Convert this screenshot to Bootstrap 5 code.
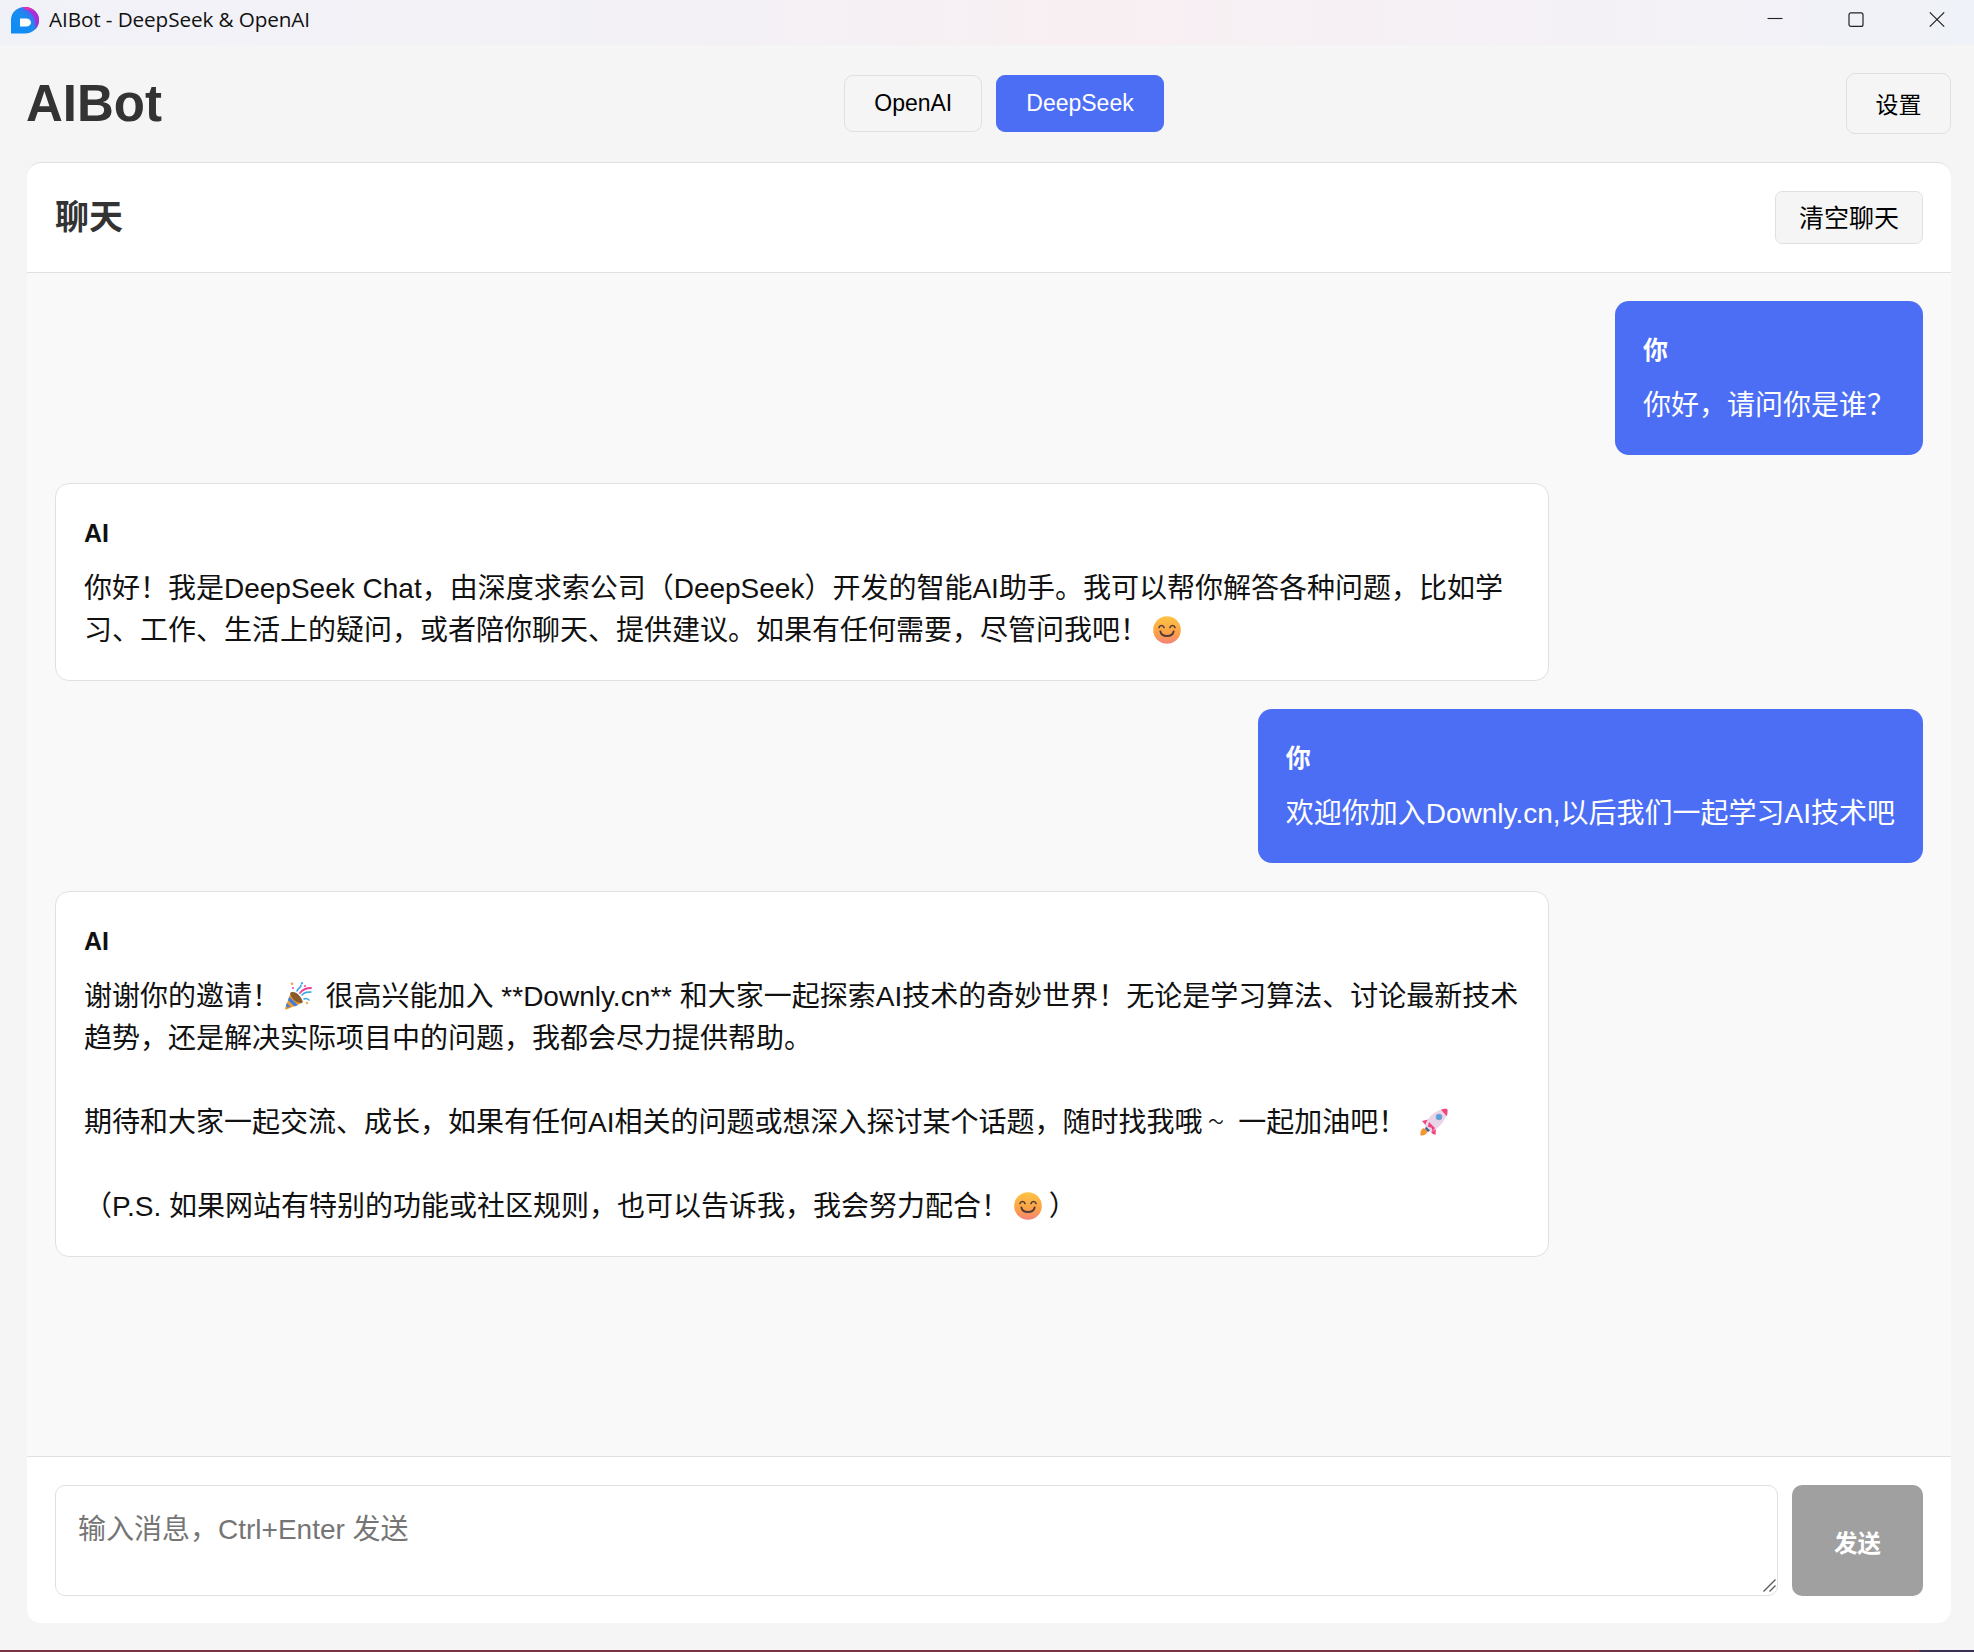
<!DOCTYPE html>
<html lang="zh-CN">
<head>
<meta charset="utf-8">
<title>AIBot - DeepSeek &amp; OpenAI</title>
<link href="https://cdn.jsdelivr.net/npm/bootstrap@5.3.0/dist/css/bootstrap.min.css" rel="stylesheet">
<style>
html,body{height:1652px;overflow:hidden}
body{background:#f5f5f5;font-family:"Liberation Sans","Noto Sans CJK SC",sans-serif;color:#000}
.win{height:1652px}
.titlebar{height:45px;padding:0 0 5px 10px;background:linear-gradient(90deg,#f1f2f8 0%,#f3f1f6 35%,#f8eff2 55%,#f4f1f6 80%,#eff2f8 100%)}
.titlebar .ttl{font-family:"Open Sans","Noto Sans CJK SC",sans-serif;font-size:20.7px;margin-left:9px;color:#111;letter-spacing:-.1px}
.wcs{gap:6px}
.wc{width:75px}
.apphead{height:117px;padding:0 23px 0 26px}
.brand{font-size:51px;font-weight:700;color:#333;margin:0;line-height:1.2}
.app-btn{font-size:23px;line-height:35px;padding:10px 29px;border:1px solid #e0e0e0;background:#f5f5f5;color:#000;border-radius:9px}
.app-btn.on{background:#4c6ef5;border-color:#4c6ef5;color:#fff}
.modegroup{gap:14px}
.setbtn{padding:15px 28.5px 11px;line-height:33px}
.panel{margin:0 23px 27px 27px;background:#fff;border-top:1px solid #e0e0e0;border-radius:14px;overflow:hidden;min-height:0}
.panelhead{height:110px;padding:0 28px;border-bottom:1px solid #e0e0e0}
.panelhead h2{font-size:34px;font-weight:700;color:#333;margin:0}
.clearbtn{font-size:25px;line-height:37px;padding:8px 23px 6px;border-radius:7px}
.msgs{background:#f9f9f9;padding:28px;gap:28px;min-height:0}
.bub{max-width:1494px;padding:28px;border-radius:14px;font-size:28px;line-height:42px;white-space:pre-wrap;word-break:normal}
.bub.me{background:#4c6ef5;color:#fff;align-self:flex-end}
.bub.ai{background:#fff;border:1px solid #e0e0e0;align-self:flex-start;width:1494px;color:#111}
.who{font-size:25px;line-height:42px;font-weight:700;margin-bottom:14px}
.emo{width:28px;height:28px;vertical-align:-4px;margin:0 5px 0 -3px}
.emo.far{margin-left:6px}
.rparen{margin-left:-6px}
.tilde{display:inline-block;transform:scale(.55,.6)}
.inputrow{height:167px;padding:28px;border-top:1px solid #e0e0e0;gap:14px}
.inputwrap{min-width:0}
.inputwrap textarea{font-size:28px;line-height:42px;padding:23px 22px 21px;border:1px solid #e0e0e0;border-radius:10px;height:111px;color:#111;font-family:inherit;resize:none}
.inputwrap textarea::placeholder{color:#757575}
.grip{right:2px;bottom:3px;pointer-events:none}
.sendbtn{width:131px;height:111px;background:#a0a0a0;border:0;color:#fff;font-weight:700;font-size:23.5px;border-radius:10px;flex:none;padding-top:15px}
.strip{height:2px;background:linear-gradient(90deg,#7b3242 0,#7b3242 97.2%,#3a3050 97.3%)}
</style>
</head>
<body>
<svg width="0" height="0" class="position-absolute">
<defs>
<linearGradient id="sg" x1="0" y1="0" x2="0" y2="1"><stop offset="0" stop-color="#fdc443"/><stop offset=".65" stop-color="#fb9e48"/><stop offset="1" stop-color="#f5827c"/></linearGradient>
<symbol id="smile" viewBox="0 0 28 28">
<circle cx="14" cy="14" r="13.8" fill="url(#sg)"/>
<path d="M6 11.4c.8-2.600 4.200-2.600 5 0M17 11.400c.8-2.600 4.200-2.600 5 0" fill="none" stroke="#4f3a3c" stroke-width="1.6" stroke-linecap="round"/>
<path d="M7.400 15.500c1.200 6 12 6 13.200 0" fill="none" stroke="#4f3a3c" stroke-width="1.9" stroke-linecap="round"/>
</symbol>
<symbol id="party" viewBox="0 0 28 28">
<path d="M5.800 10.500 17 21 1.400 27.400C.4 27.800-.2 27 .2 26Z" fill="#f59a2e"/>
<path d="M4.200 14.800 13 23l-3.400 1.400-6.600-6.200ZM1.800 21l3.800 3.600-3 1.200-1.700-1.600Z" fill="#3f7fd8"/>
<path d="M5.800 10.500C8 9 13 11 15.500 15s2.600 5.400 1.500 6c-2 .6-7-1-9.500-4.500S4.800 11.500 5.800 10.500Z" fill="#8a5a2a"/>
<path d="M12 9c1-3 4-3 4-6M17 13c3-3 5-3 9-3M19 17c2-1 4 0 5 1" fill="none" stroke="#39a7e8" stroke-width="1.6" stroke-linecap="round"/>
<path d="M15 11c3-4 7-5 11-5" fill="none" stroke="#ee3f96" stroke-width="1.8" stroke-linecap="round"/>
<circle cx="7" cy="1.800" r="1.300" fill="#f3a33a"/><circle cx="8" cy="6" r="1" fill="#ee3f96"/><circle cx="20" cy="4" r="1" fill="#ee3f96"/><circle cx="22" cy="21" r="1.300" fill="#f3b05a"/><circle cx="17" cy="1.200" r="1.100" fill="#39a7e8"/>
</symbol>
<symbol id="rocket" viewBox="0 0 28 28">
<path d="M.5 27.500c-.6-4 1-6.800 3.500-7.500l3.500 3.500c-.8 2.800-3.300 4.200-7 4Z" fill="#f5952f"/>
<path d="M2 13 8 11.500 9 18 5.500 17ZM16 20l-.5 7-3.500-1.500-2-4Z" fill="#f2457f"/>
<path d="M5 18C7 10 13 4 22 1.500L27 6.500C24 14 19 20 11 24Z" fill="#e9d5e8"/>
<path d="M21 1.800c2-.8 5-1.300 6.200-.8.700.7.300 4.800-.4 7.300Z" fill="#f2457f"/>
<path d="M6 18.500 10 22.500l-2 1.500-3-3Z" fill="#44608f"/>
<path d="M9 14 15 20l-2.500 3.500-.9-3.700-3.700-1Z" fill="#f2457f"/>
<circle cx="19" cy="9" r="3.300" fill="#9c9cb4"/><circle cx="19" cy="9" r="2.400" fill="#4aa6ee"/>
</symbol>
<linearGradient id="lg" x1="0" y1="1" x2="1" y2="0"><stop offset="0" stop-color="#0c8cf5"/><stop offset=".55" stop-color="#1a8cf0"/><stop offset="1" stop-color="#7a3ff0"/></linearGradient>
</defs>
</svg>
<div class="win d-flex flex-column">
  <div class="titlebar d-flex align-items-center flex-shrink-0">
    <svg width="30" height="28" viewBox="0 0 30 28" class="flex-shrink-0">
      <path d="M1 27.500V14C1 6.500 7 1 14.500 1 22.500 1 29 7 29 14.500S22.500 27.500 15 27.500Z" fill="url(#lg)"/>
      <path d="M13 1.200c6-1 15 3 16 11 .5 4-1 8-4 11 1-6 0-13-5-17-2-2-4.500-3.500-7-5Z" fill="#a62fd8"/>
      <path d="M13 1.200c5-.8 10 1.500 12 4.300-3-1.300-6-1.500-8.500-1.500Z" fill="#e02fb0"/>
      <path d="M10 12.500h6c3.300 0 5 1.800 5 4s-1.700 4-5 4h-6Z" fill="#fff"/>
    </svg>
    <span class="ttl">AIBot - DeepSeek &amp; OpenAI</span>
    <div class="ms-auto d-flex align-items-center wcs">
      <div class="wc d-flex justify-content-center"><svg width="16" height="16" viewBox="0 0 16 16"><path d="M.5 6.500h15" stroke="#222" stroke-width="1.100"/></svg></div>
      <div class="wc d-flex justify-content-center"><svg width="16" height="16" viewBox="0 0 16 16"><rect x="1" y=".8" width="14" height="13.600" rx="2" fill="none" stroke="#222" stroke-width="1.200"/></svg></div>
      <div class="wc d-flex justify-content-center"><svg width="16" height="16" viewBox="0 0 16 16"><path d="M.8.400 15.200 14.600M15.200.400.800 14.600" stroke="#222" stroke-width="1.200"/></svg></div>
    </div>
  </div>
  <header class="apphead d-flex align-items-center justify-content-between flex-shrink-0">
    <h1 class="brand">AIBot</h1>
    <div class="d-flex modegroup">
      <button type="button" class="btn app-btn">OpenAI</button>
      <button type="button" class="btn app-btn on">DeepSeek</button>
    </div>
    <button type="button" class="btn app-btn setbtn">设置</button>
  </header>
  <main class="panel d-flex flex-column flex-grow-1">
    <div class="panelhead d-flex align-items-center justify-content-between flex-shrink-0">
      <h2>聊天</h2>
      <button type="button" class="btn app-btn clearbtn">清空聊天</button>
    </div>
    <div class="msgs d-flex flex-column flex-grow-1">
      <div class="bub me"><div class="who">你</div>你好，请问你是谁？</div>
      <div class="bub ai"><div class="who">AI</div>你好！我是DeepSeek Chat，由深度求索公司（DeepSeek）开发的智能AI助手。我可以帮你解答各种问题，比如学习、工作、生活上的疑问，或者陪你聊天、提供建议。如果有任何需要，尽管问我吧！ <svg class="emo"><use href="#smile"/></svg></div>
      <div class="bub me"><div class="who">你</div>欢迎你加入Downly.cn,以后我们一起学习AI技术吧</div>
      <div class="bub ai"><div class="who">AI</div>谢谢你的邀请！ <svg class="emo"><use href="#party"/></svg> 很高兴能加入 **Downly.cn** 和大家一起探索AI技术的奇妙世界！无论是学习算法、讨论最新技术趋势，还是解决实际项目中的问题，我都会尽力提供帮助。

期待和大家一起交流、成长，如果有任何AI相关的问题或想深入探讨某个话题，随时找我哦<span class="tilde">～</span> 一起加油吧！ <svg class="emo far"><use href="#rocket"/></svg>

（P.S. 如果网站有特别的功能或社区规则，也可以告诉我，我会努力配合！ <svg class="emo"><use href="#smile"/></svg> <span class="rparen">）</span></div>
    </div>
    <div class="inputrow d-flex flex-shrink-0">
      <div class="inputwrap position-relative flex-grow-1">
        <textarea class="form-control" placeholder="输入消息，Ctrl+Enter 发送"></textarea>
        <svg class="grip position-absolute" width="13" height="13" viewBox="0 0 13 13"><path d="M.5 12.500 12.500.5M6.500 12.500l6-6" stroke="#555" stroke-width="1.300"/></svg>
      </div>
      <button type="button" class="btn sendbtn">发送</button>
    </div>
  </main>
  <div class="strip flex-shrink-0"></div>
</div>
</body>
</html>
